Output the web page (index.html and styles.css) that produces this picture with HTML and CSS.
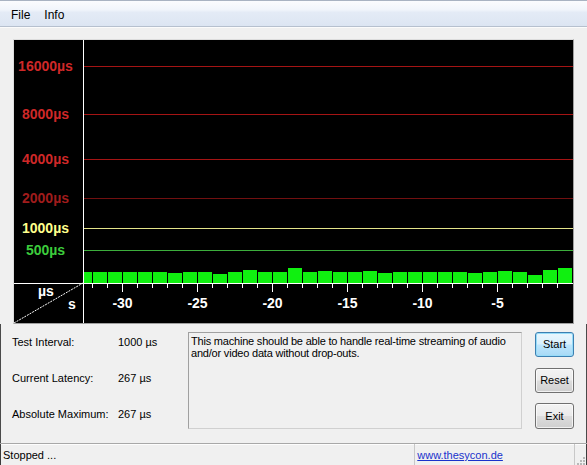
FILE: index.html
```html
<!DOCTYPE html>
<html>
<head>
<meta charset="utf-8">
<title>DPC Latency Checker</title>
<link rel="stylesheet" href="styles.css">
</head>
<body>
<div class="window">
  <div class="menubar">
    <span class="menu-item">File</span>
    <span class="menu-item">Info</span>
  </div>
  <div class="main">
    <div class="chart">
      <svg class="chart-svg" width="559" height="283" viewBox="0 0 559 283">
        <rect x="0" y="0" width="559" height="283" fill="#000"/>
        <!-- grid lines -->
        <rect x="70" y="26" width="489" height="1" fill="#a51414"/>
        <rect x="70" y="74" width="489" height="1" fill="#a51414"/>
        <rect x="70" y="119" width="489" height="1" fill="#a51414"/>
        <rect x="70" y="158" width="489" height="1" fill="#721010"/>
        <rect x="70" y="188" width="489" height="1" fill="#e4e48a"/>
        <rect x="70" y="210" width="489" height="1" fill="#3cae3c"/>
        <!-- level labels -->
        <g class="lvl" text-anchor="middle">
          <text x="31.5" y="31" fill="#cf2828">16000µs</text>
          <text x="31.5" y="79" fill="#cf2828">8000µs</text>
          <text x="31.5" y="124" fill="#cf2828">4000µs</text>
          <text x="31.5" y="163" fill="#a01c1c">2000µs</text>
          <text x="31.5" y="193" fill="#ffff8c">1000µs</text>
          <text x="31.5" y="215" fill="#3ccc3c">500µs</text>
        </g>
        <!-- bars -->
        <g fill="#10f010">
          <rect x="70" y="232" width="8" height="11"/>
          <rect x="79" y="232" width="14" height="11"/>
          <rect x="94" y="232" width="14" height="11"/>
          <rect x="109" y="232" width="14" height="11"/>
          <rect x="124" y="232" width="14" height="11"/>
          <rect x="139" y="232" width="14" height="11"/>
          <rect x="154" y="233" width="14" height="10"/>
          <rect x="169" y="232" width="14" height="11"/>
          <rect x="184" y="232" width="14" height="11"/>
          <rect x="199" y="234" width="14" height="9"/>
          <rect x="214" y="232" width="14" height="11"/>
          <rect x="229" y="230" width="14" height="13"/>
          <rect x="244" y="232" width="14" height="11"/>
          <rect x="259" y="232" width="14" height="11"/>
          <rect x="274" y="228" width="14" height="15"/>
          <rect x="289" y="232" width="14" height="11"/>
          <rect x="304" y="231" width="14" height="12"/>
          <rect x="319" y="232" width="14" height="11"/>
          <rect x="334" y="232" width="14" height="11"/>
          <rect x="349" y="231" width="14" height="12"/>
          <rect x="364" y="233" width="14" height="10"/>
          <rect x="379" y="232" width="14" height="11"/>
          <rect x="394" y="232" width="14" height="11"/>
          <rect x="409" y="232" width="14" height="11"/>
          <rect x="424" y="232" width="14" height="11"/>
          <rect x="439" y="232" width="14" height="11"/>
          <rect x="454" y="233" width="14" height="10"/>
          <rect x="469" y="232" width="14" height="11"/>
          <rect x="484" y="231" width="14" height="12"/>
          <rect x="499" y="232" width="14" height="11"/>
          <rect x="514" y="235" width="14" height="8"/>
          <rect x="529" y="230" width="14" height="13"/>
          <rect x="544" y="228" width="14" height="15"/>
        </g>
        <!-- axes -->
        <rect x="69" y="0" width="1" height="283" fill="#fff"/>
        <rect x="0" y="243" width="559" height="1" fill="#fff"/>
        <!-- ticks -->
        <g stroke="#fff" stroke-width="1">
          <line x1="78.5" y1="244" x2="78.5" y2="248"/>
          <line x1="93.5" y1="244" x2="93.5" y2="248"/>
          <line x1="108.5" y1="244" x2="108.5" y2="252"/>
          <line x1="123.5" y1="244" x2="123.5" y2="248"/>
          <line x1="138.5" y1="244" x2="138.5" y2="248"/>
          <line x1="153.5" y1="244" x2="153.5" y2="248"/>
          <line x1="168.5" y1="244" x2="168.5" y2="248"/>
          <line x1="183.5" y1="244" x2="183.5" y2="252"/>
          <line x1="198.5" y1="244" x2="198.5" y2="248"/>
          <line x1="213.5" y1="244" x2="213.5" y2="248"/>
          <line x1="228.5" y1="244" x2="228.5" y2="248"/>
          <line x1="243.5" y1="244" x2="243.5" y2="248"/>
          <line x1="258.5" y1="244" x2="258.5" y2="252"/>
          <line x1="273.5" y1="244" x2="273.5" y2="248"/>
          <line x1="288.5" y1="244" x2="288.5" y2="248"/>
          <line x1="303.5" y1="244" x2="303.5" y2="248"/>
          <line x1="318.5" y1="244" x2="318.5" y2="248"/>
          <line x1="333.5" y1="244" x2="333.5" y2="252"/>
          <line x1="348.5" y1="244" x2="348.5" y2="248"/>
          <line x1="363.5" y1="244" x2="363.5" y2="248"/>
          <line x1="378.5" y1="244" x2="378.5" y2="248"/>
          <line x1="393.5" y1="244" x2="393.5" y2="248"/>
          <line x1="408.5" y1="244" x2="408.5" y2="252"/>
          <line x1="423.5" y1="244" x2="423.5" y2="248"/>
          <line x1="438.5" y1="244" x2="438.5" y2="248"/>
          <line x1="453.5" y1="244" x2="453.5" y2="248"/>
          <line x1="468.5" y1="244" x2="468.5" y2="248"/>
          <line x1="483.5" y1="244" x2="483.5" y2="252"/>
          <line x1="498.5" y1="244" x2="498.5" y2="248"/>
          <line x1="513.5" y1="244" x2="513.5" y2="248"/>
          <line x1="528.5" y1="244" x2="528.5" y2="248"/>
          <line x1="543.5" y1="244" x2="543.5" y2="248"/>
        </g>
        <!-- time labels -->
        <g class="axis" fill="#fff" text-anchor="middle">
          <text x="108.5" y="268">-30</text>
          <text x="183.5" y="268">-25</text>
          <text x="258.5" y="268">-20</text>
          <text x="333.5" y="268">-15</text>
          <text x="408.5" y="268">-10</text>
          <text x="483.5" y="268">-5</text>
        </g>
        <!-- corner -->
        <line x1="0" y1="283" x2="69" y2="243" stroke="#fff" stroke-width="1" stroke-dasharray="2 1"/>
        <g class="axis" fill="#fff">
          <text x="24" y="256">µs</text>
          <text x="54" y="269">s</text>
        </g>
      </svg>
    </div>
  </div>
  <div class="lower">
    <div class="stats">
      <div class="stat-row"><span class="stat-label">Test Interval:</span><span>1000 µs</span></div>
      <div class="stat-row"><span class="stat-label">Current Latency:</span><span>267 µs</span></div>
      <div class="stat-row"><span class="stat-label">Absolute Maximum:</span><span>267 µs</span></div>
    </div>
    <div class="desc">This machine should be able to handle real-time streaming of audio and/or video data without drop-outs.</div>
    <div class="buttons">
      <div class="btn btn-default">Start</div>
      <div class="btn btn-reset">Reset</div>
      <div class="btn btn-exit">Exit</div>
    </div>
  </div>
  <div class="status">
    <div class="st-main">Stopped ...</div>
    <div class="st-link"><span class="link">www.thesycon.de</span></div>
    <div class="st-grip">
      <svg width="11" height="11" viewBox="0 0 11 11" class="grip">
        <g fill="#b8b8b8">
          <rect x="8" y="2" width="2" height="2"/>
          <rect x="5" y="5" width="2" height="2"/>
          <rect x="8" y="5" width="2" height="2"/>
          <rect x="2" y="8" width="2" height="2"/>
          <rect x="5" y="8" width="2" height="2"/>
          <rect x="8" y="8" width="2" height="2"/>
        </g>
      </svg>
    </div>
  </div>
</div>
</body>
</html>
```

FILE: styles.css
```css
html, body {
  margin: 0;
  padding: 0;
}
body {
  background: #f0f0f0;
  font-family: "Liberation Sans", Arial, sans-serif;
  font-size: 11px;
  color: #000;
}
.window {
  width: 587px;
  height: 465px;
  display: flex;
  flex-direction: column;
  overflow: hidden;
}
.menubar {
  box-sizing: border-box;
  height: 27px;
  padding: 3px 0 0 4px;
  background: linear-gradient(#fbfcfe 0%, #f1f5fb 35%, #e4ebf6 45%, #dce5f2 100%);
  border-top: 1px solid #a9b3c2;
  border-bottom: 1px solid #b6c0ce;
  display: flex;
  font-size: 12px;
  line-height: 22px;
}
.menu-item {
  padding: 0 7px;
}
.main {
  border-top: 1px solid #fbfbfb;
  padding: 11px 0 0 13px;
}
.chart {
  width: max-content;
  border: 1px solid;
  border-color: #dcdcdc #a0a0a0 #a0a0a0 #dcdcdc;
}
.chart-svg {
  display: block;
}
.lvl {
  font-family: "Liberation Sans", Arial, sans-serif;
  font-weight: bold;
  font-size: 14px;
}
.axis {
  font-family: "Liberation Sans", Arial, sans-serif;
  font-weight: bold;
  font-size: 14px;
}
.lower {
  flex: 1;
  display: flex;
  align-items: flex-start;
  padding: 8px 0 0 12px;
  box-shadow: inset 1px 0 #4a4a4a, inset -1px 0 #4a4a4a;
}
.stats {
  width: 176px;
  padding-top: 3px;
}
.stat-row {
  display: flex;
  height: 36px;
  line-height: 14px;
}
.stat-label {
  width: 106px;
}
.desc {
  box-sizing: border-box;
  width: 334px;
  height: 97px;
  border: 1px solid;
  border-color: #a0a0a0 #d0d0d0 #d0d0d0 #a0a0a0;
  padding: 2px 2px 0 2px;
  line-height: 12px;
  letter-spacing: -0.2px;
}
.buttons {
  margin-left: 13px;
  display: flex;
  flex-direction: column;
}
.btn {
  box-sizing: border-box;
  width: 39px;
  height: 25px;
  border: 1px solid #707070;
  border-radius: 3px;
  text-align: center;
  line-height: 23px;
  background: linear-gradient(#f3f3f3 0%, #ebebeb 48%, #dddddd 52%, #cfcfcf 100%);
  box-shadow: inset 0 0 0 1px rgba(255,255,255,0.7);
}
.btn-default {
  border-color: #3c7fb1;
  background: linear-gradient(#eaf6fd 0%, #d9f0fc 48%, #bee6fd 52%, #a7d9f5 100%);
  box-shadow: inset 0 0 0 1px #97dcf8;
}
.btn-reset {
  margin-top: 11px;
}
.btn-exit {
  margin-top: 10px;
  height: 26px;
  line-height: 24px;
}
.status {
  box-sizing: border-box;
  height: 25px;
  display: flex;
  border-top: 1px solid #a8a8a8;
  border-bottom: 1px solid #3c3c3c;
  box-shadow: inset 1px 0 #3c3c3c, inset -1px 0 #3c3c3c, inset 0 1px #fdfdfd;
  line-height: 23px;
}
.st-main {
  width: 412px;
  padding-left: 3px;
}
.st-link {
  box-sizing: border-box;
  width: 160px;
  border-left: 1px solid #c8c8c8;
  padding-left: 2px;
}
.link {
  color: #1a33cc;
  text-decoration: underline;
}
.st-grip {
  flex: 1;
  border-left: 1px solid #c8c8c8;
  display: flex;
  align-items: flex-end;
  justify-content: flex-end;
  padding: 0 1px 1px 0;
}
.grip {
  display: block;
}
```
